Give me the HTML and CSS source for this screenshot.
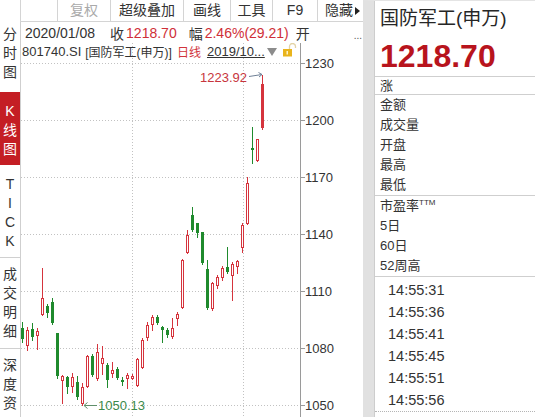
FILE: index.html
```html
<!DOCTYPE html>
<html lang="zh">
<head>
  <meta charset="UTF-8">
  <title>国防军工(申万) K线图</title>
  <link rel="stylesheet" href="styles.css">
</head>
<body>
<div class="screen">
  <div class="left">
    <!-- barre d'outils -->
    <div class="toolbar">
      <div class="tool corner"></div>
      <div class="tool spacer"></div>
      <div class="tool off w-fq">复权</div>
      <div class="tool w-cj">超级叠加</div>
      <div class="tool w-hx">画线</div>
      <div class="tool w-gj">工具</div>
      <div class="tool w-f9">F9</div>
      <div class="tool w-yc">隐藏<svg class="tri" width="5" height="8" viewBox="0 0 5 8"><path d="M0 0 L5 4 L0 8 Z" fill="#222"/></svg></div>
    </div>

    <div class="workspace">
      <div class="sidebar">
        <div class="side-tab tab-fs"><span>分</span><span>时</span><span>图</span></div>
        <div class="side-tab tab-k active"><span>K</span><span>线</span><span>图</span></div>
        <div class="side-tab tab-tick"><span>T</span><span>I</span><span>C</span><span>K</span></div>
        <div class="side-tab tab-cj"><span>成</span><span>交</span><span>明</span><span>细</span></div>
        <div class="side-tab tab-sd"><span>深</span><span>度</span><span>资</span></div>
      </div>

      <div class="main">
        <div class="quote-line">
          <span class="q-date">2020/01/08</span>
          <span class="q-label q-close">收</span><span class="q-up">1218.70</span>
          <span class="q-label q-range">幅</span><span class="q-up">2.46%(29.21)</span>
          <span class="q-label q-open">开</span>
          <span class="q-more">...</span>
        </div>

        <div class="chart">
          <div class="chart-title">
            <span class="ct-code">801740.SI</span>
            <span class="ct-name">[国防军工(申万)]</span>
            <span class="ct-period">日线</span>
            <span class="ct-range">2019/10...</span>
            <svg class="ct-drop" width="10" height="8" viewBox="0 0 10 8"><path d="M0 0 L10 0 L5 8 Z" fill="#8c8c8c"/></svg>
            <svg class="ct-lock" width="15" height="14" viewBox="0 0 15 14"><path d="M7.5 6 V3.5 a3 3 0 0 1 6 0 V5" fill="none" stroke="#e2d3a6" stroke-width="1.3"/><rect x="1" y="6" width="9" height="7.5" fill="#e9b41c"/><rect x="4.5" y="8" width="1.5" height="3.5" fill="#fff3c6"/></svg>
          </div>

          <svg id="kline" width="342" height="374" viewBox="21 43 342 374">
            <g class="grid">
              <line x1="132.5" y1="43" x2="132.5" y2="417"/>
              <line x1="243.5" y1="43" x2="243.5" y2="417"/>
              <line x1="21" y1="63.5" x2="300" y2="63.5"/>
              <line x1="21" y1="120.5" x2="300" y2="120.5"/>
              <line x1="21" y1="177.5" x2="300" y2="177.5"/>
              <line x1="21" y1="234.5" x2="300" y2="234.5"/>
              <line x1="21" y1="291.5" x2="300" y2="291.5"/>
              <line x1="21" y1="348.5" x2="300" y2="348.5"/>
              <line x1="21" y1="405.5" x2="300" y2="405.5"/>
            </g>
            <g class="axis">
              <line x1="300.5" y1="43" x2="300.5" y2="417"/>
              <line x1="300" y1="63.5" x2="305" y2="63.5"/>
              <line x1="300" y1="120.5" x2="305" y2="120.5"/>
              <line x1="300" y1="177.5" x2="305" y2="177.5"/>
              <line x1="300" y1="234.5" x2="305" y2="234.5"/>
              <line x1="300" y1="291.5" x2="305" y2="291.5"/>
              <line x1="300" y1="348.5" x2="305" y2="348.5"/>
              <line x1="300" y1="405.5" x2="305" y2="405.5"/>
            </g>
            <g class="axis-labels">
              <text x="305" y="68">1230</text>
              <text x="305" y="125">1200</text>
              <text x="305" y="182">1170</text>
              <text x="305" y="239">1140</text>
              <text x="305" y="296">1110</text>
              <text x="305" y="353">1080</text>
              <text x="305" y="410">1050</text>
            </g>
            <g id="candles"></g>
            <g class="mark-high">
              <text x="247" y="82">1223.92</text>
              <path d="M249 76.5 L262 74.5 M258.5 72.5 L262 74.5 L259 77"/>
            </g>
            <g class="mark-low">
              <path d="M97 405.5 L84 405.5 M87.5 402.5 L84 405.5 L87.5 408.5"/>
              <text x="98" y="410">1050.13</text>
            </g>
          </svg>
        </div>
      </div>
    </div>
  </div>

  <!-- panneau de droite -->
  <div class="panel">
    <div class="panel-inner">
      <div class="panel-head">
        <div class="stock-name">国防军工(申万)</div>
        <div class="stock-price">1218.70</div>
      </div>
      <div class="panel-row">涨</div>
      <div class="panel-group g1">
        <div>金额</div>
        <div>成交量</div>
        <div>开盘</div>
        <div>最高</div>
        <div>最低</div>
      </div>
      <div class="panel-group g2">
        <div>市盈率<sup>TTM</sup></div>
        <div>5日</div>
        <div>60日</div>
        <div>52周高</div>
      </div>
      <div class="ticks">
        <div>14:55:31</div>
        <div>14:55:36</div>
        <div>14:55:41</div>
        <div>14:55:45</div>
        <div>14:55:51</div>
        <div>14:55:56</div>
      </div>
    </div>
  </div>
</div>

<script>
  // [open, high, low, close]
  const candles = [
    [1090.5, 1093.7, 1083.2, 1084.7],
    [1081.6, 1091.1, 1079.0, 1089.5],
    [1090.0, 1093.2, 1084.2, 1085.8],
    [1086.8, 1090.5, 1079.5, 1089.0],
    [1097.9, 1122.1, 1097.4, 1106.3],
    [1102.1, 1103.2, 1096.3, 1098.4],
    [1104.2, 1106.3, 1092.6, 1093.2],
    [1087.9, 1087.9, 1064.2, 1065.3],
    [1063.2, 1065.8, 1051.1, 1065.3],
    [1064.7, 1065.3, 1056.3, 1059.5],
    [1060.0, 1066.8, 1056.8, 1064.7],
    [1062.1, 1065.3, 1053.2, 1054.2],
    [1051.1, 1061.6, 1050.13, 1059.5],
    [1060.0, 1076.3, 1059.5, 1075.8],
    [1075.8, 1076.8, 1065.3, 1065.8],
    [1064.2, 1082.1, 1063.2, 1077.9],
    [1072.1, 1081.1, 1066.3, 1074.7],
    [1071.1, 1072.1, 1059.5, 1063.2],
    [1066.8, 1072.6, 1064.7, 1068.4],
    [1069.0, 1070.0, 1063.7, 1064.2],
    [1063.2, 1064.7, 1060.5, 1062.1],
    [1064.2, 1066.8, 1059.0, 1065.8],
    [1064.2, 1066.3, 1063.7, 1065.3],
    [1060.5, 1074.7, 1060.0, 1074.2],
    [1070.0, 1085.3, 1069.5, 1084.2],
    [1085.8, 1093.7, 1084.2, 1092.1],
    [1092.6, 1097.4, 1089.5, 1096.3],
    [1096.3, 1097.4, 1092.6, 1093.2],
    [1091.1, 1091.6, 1083.2, 1089.5],
    [1089.5, 1090.5, 1085.8, 1086.8],
    [1086.3, 1095.8, 1085.3, 1090.5],
    [1095.8, 1099.0, 1092.1, 1097.9],
    [1101.6, 1126.8, 1101.1, 1126.3],
    [1130.5, 1142.1, 1130.0, 1139.5],
    [1150.0, 1154.2, 1141.6, 1142.1],
    [1145.8, 1145.8, 1138.4, 1140.5],
    [1141.1, 1141.1, 1124.2, 1124.7],
    [1121.6, 1126.3, 1100.6, 1101.1],
    [1101.1, 1114.7, 1100.0, 1114.2],
    [1113.2, 1118.4, 1111.6, 1117.4],
    [1117.4, 1123.2, 1115.8, 1122.1],
    [1122.6, 1133.2, 1119.5, 1120.0],
    [1118.4, 1125.3, 1105.3, 1124.2],
    [1123.2, 1126.3, 1119.5, 1125.8],
    [1133.2, 1145.8, 1130.5, 1144.7],
    [1145.8, 1170.0, 1145.3, 1166.8],
    [1185.3, 1196.3, 1177.4, 1184.2],
    [1179.0, 1190.0, 1178.4, 1190.0],
    [1195.8, 1223.92, 1195.3, 1218.70]
  ];

  const NS = 'http://www.w3.org/2000/svg';
  const group = document.getElementById('candles');

  function py(p) {
    return 63 + (1230 - p) * 1.9;
  }

  function add(tag, attrs) {
    const el = document.createElementNS(NS, tag);
    for (const k in attrs) el.setAttribute(k, attrs[k]);
    group.appendChild(el);
  }

  candles.forEach((k, i) => {
    const [o, h, l, c] = k;
    const x = Math.floor(22 + 5.02 * i);
    const up = c >= o;
    const last = i === candles.length - 1;
    const top = Math.round(py(Math.max(o, c)));
    const bot = Math.round(py(Math.min(o, c)));
    const hi = Math.round(py(h));
    const lo = Math.round(py(l));
    const color = up ? '#d5343d' : '#1f8a2d';

    add('line', { x1: x + 0.5, y1: hi, x2: x + 0.5, y2: lo + 1, stroke: color, 'stroke-width': 1 });

    if (up && !last) {
      add('rect', { x: x - 0.5, y: top + 0.5, width: 2, height: Math.max(bot - top, 1), fill: '#fff', stroke: color, 'stroke-width': 1 });
    } else {
      add('rect', { x: x - 1, y: top, width: 3, height: Math.max(bot - top, 1), fill: color });
    }
  });
</script>
</body>
</html>
```

FILE: styles.css
```css
* {
  box-sizing: border-box;
}

body {
  margin: 0;
  background: #fff;
  font-family: "Liberation Sans", "Noto Sans CJK SC", sans-serif;
  color: #333;
}

.screen {
  display: flex;
  width: 535px;
  height: 417px;
  overflow: hidden;
}

.left {
  display: flex;
  flex-direction: column;
  width: 363px;
}

/* toolbar */

.toolbar {
  display: flex;
  height: 22px;
  flex-shrink: 0;
}

.tool {
  height: 22px;
  line-height: 21px;
  font-size: 14px;
  text-align: center;
  white-space: nowrap;
  border-right: 1px solid #d4d4d4;
  border-bottom: 1px solid #d4d4d4;
}

.tool.corner {
  width: 21px;
  border-bottom: none;
}

.tool.spacer { width: 37px; }
.w-fq { width: 53px; }
.w-cj { width: 73px; }
.w-hx { width: 47px; }
.w-gj { width: 42px; }
.w-f9 { width: 45px; }

.w-yc {
  display: flex;
  align-items: center;
  width: 45px;
  border-right: none;
  padding-left: 7px;
}

.tool.off {
  color: #aaa;
}

.tri {
  margin-left: 2px;
  flex-shrink: 0;
}

/* body */

.workspace {
  display: flex;
  flex: 1;
  min-height: 0;
}

.sidebar {
  width: 21px;
  flex-shrink: 0;
  border-right: 1px solid #cfcfcf;
  font-size: 14px;
  color: #333;
}

.side-tab {
  display: flex;
  flex-direction: column;
  align-items: center;
}

.side-tab span {
  line-height: 19px;
  height: 19px;
}

.tab-fs {
  height: 70px;
  padding-top: 3px;
}

.tab-k {
  height: 73px;
  padding-top: 10px;
}

.side-tab.active {
  background: #c41e24;
  color: #fff;
}

.tab-tick {
  height: 93px;
  padding-top: 10px;
  border-bottom: 1px solid #d0d0d0;
}

.tab-cj {
  height: 91px;
  padding-top: 7px;
  border-bottom: 1px solid #d0d0d0;
}

.tab-sd {
  padding-top: 7px;
}

.main {
  flex: 1;
  display: flex;
  flex-direction: column;
}

.quote-line {
  display: flex;
  align-items: center;
  height: 21px;
  padding-left: 4px;
  font-size: 14px;
  white-space: nowrap;
}

.q-up {
  color: #cf2f38;
  margin-left: 2px;
}

.q-close { margin-left: 15px; }
.q-range { margin-left: 12px; }
.q-open { margin-left: 7px; }

.q-more {
  margin-left: auto;
  padding-right: 1px;
  font-size: 10px;
  color: #555;
  position: relative;
  top: 3px;
}

.chart {
  position: relative;
  height: 374px;
}

#kline {
  display: block;
}

.chart-title {
  position: absolute;
  top: 0;
  left: 1px;
  display: flex;
  align-items: center;
  height: 17px;
  font-size: 13px;
  white-space: nowrap;
  color: #333;
}

.ct-name {
  margin-left: 4px;
  font-size: 12px;
}

.ct-period {
  margin-left: 5px;
  font-size: 12px;
  color: #d1343c;
}

.ct-range {
  margin-left: 6px;
  text-decoration: underline;
}

.ct-drop {
  margin-left: 2px;
}

.ct-lock {
  margin-left: 5px;
  margin-top: -4px;
}

.grid line {
  stroke: #c2c2c2;
  stroke-width: 1;
  stroke-dasharray: 1 2;
}

.axis line {
  stroke: #9a9a9a;
  stroke-width: 1;
}

.axis-labels text {
  font-family: "Liberation Sans", sans-serif;
  font-size: 13px;
  fill: #333;
}

.mark-high text {
  font-family: "Liberation Sans", sans-serif;
  font-size: 13px;
  fill: #c7353d;
  text-anchor: end;
}

.mark-high path {
  fill: none;
  stroke: #6f8096;
  stroke-width: 1;
}

.mark-low text {
  font-family: "Liberation Sans", sans-serif;
  font-size: 13px;
  fill: #3c8a4b;
}

.mark-low path {
  fill: none;
  stroke: #5f8f6a;
  stroke-width: 1;
}

/* right panel */

.panel {
  width: 172px;
  flex-shrink: 0;
  border-left: 11px solid #e1e1e1;
  border-top: 1px solid #e4e4e4;
}

.panel-inner {
  height: 100%;
  border-left: 1px solid #cdcdcd;
  font-size: 13px;
  color: #333;
}

.panel-head {
  height: 76px;
  border-bottom: 1px solid #cfcfcf;
  padding-left: 5px;
}

.stock-name {
  font-size: 19px;
  line-height: 35px;
  color: #262626;
}

.stock-price {
  font-size: 32px;
  font-weight: bold;
  line-height: 40px;
  color: #b8141d;
}

.panel-row {
  height: 18px;
  line-height: 17px;
  padding-left: 5px;
  border-bottom: 1px solid #cfcfcf;
}

.panel-group {
  padding-left: 5px;
  border-bottom: 1px solid #cfcfcf;
}

.panel-group div {
  height: 20px;
  line-height: 20px;
}

.panel-group sup {
  font-size: 8px;
  line-height: 0;
  vertical-align: 5px;
}

.ticks {
  padding-top: 2px;
  padding-left: 13px;
  font-size: 14.5px;
  border-bottom: 1px dotted #b5b5b5;
}

.ticks div {
  height: 22px;
  line-height: 22px;
}
```
